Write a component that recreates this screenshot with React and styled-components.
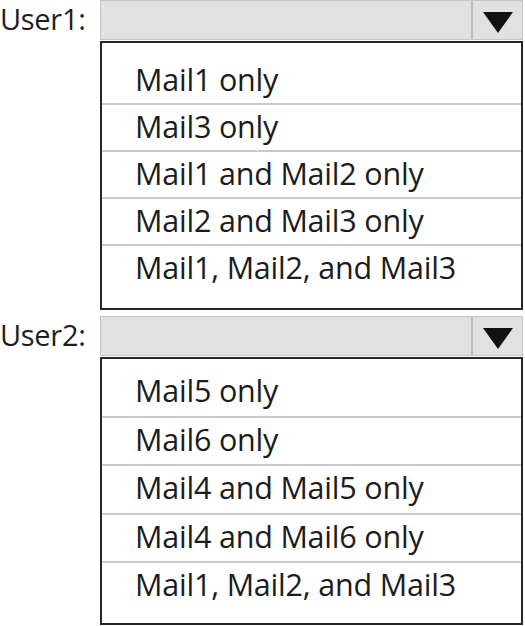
import React from "react";
import styled, { createGlobalStyle } from "styled-components";

const GlobalStyle = createGlobalStyle`
  html, body {
    margin: 0;
    padding: 0;
    background: #ffffff;
  }
  body {
    font-family: "Open Sans", "Noto Sans", "Liberation Sans", sans-serif;
    color: #1a1a1a;
  }
`;

const Page = styled.div`
  width: 525px;
  display: flex;
  flex-direction: column;
`;

const Section = styled.div`
  display: flex;
  margin-top: ${(p) => p.top}px;
`;

const Label = styled.div`
  width: 100px;
  flex: none;
  font-size: 29px;
  line-height: 38px;
  color: #1e1e1e;
  letter-spacing: -0.3px;
`;

const Field = styled.div`
  width: 423px;
  display: flex;
  flex-direction: column;
`;

const SelectBar = styled.div`
  height: 40px;
  display: flex;
  box-sizing: border-box;
  background: #e1e1e1;
  border: 1px solid #c4c4c4;
`;

const SelectValue = styled.div`
  flex: 1;
  border-right: 2px solid #bdbdbd;
`;

const ArrowBox = styled.div`
  width: 49px;
  display: flex;
  align-items: center;
  justify-content: center;
  padding-top: 4px;
  box-sizing: border-box;
`;

const OptionList = styled.ul`
  list-style: none;
  margin: 1px 0 0 0;
  padding: ${(p) => p.padTop}px 0 ${(p) => p.padBottom}px 0;
  border: 2px solid #262626;
  background: #ffffff;
`;

const OptionRow = styled.li`
  height: ${(p) => p.h}px;
  box-sizing: border-box;
  padding-left: 33px;
  font-size: 30.5px;
  line-height: ${(p) => p.h - 5}px;
  letter-spacing: -0.2px;
  color: #1c1c1c;
  border-bottom: ${(p) => (p.last ? "none" : "2px solid #c9c9c9")};
  white-space: nowrap;
`;

const Arrow = () => (
  <svg width="30" height="21" viewBox="0 0 30 21">
    <polygon points="0,0 30,0 15,21" fill="#111" />
  </svg>
);

const groups = [
  {
    user: "User1:",
    top: 0,
    padTop: 15,
    padBottom: 15,
    rowH: 47,
    options: [
      "Mail1 only",
      "Mail3 only",
      "Mail1 and Mail2 only",
      "Mail2 and Mail3 only",
      "Mail1, Mail2, and Mail3",
    ],
  },
  {
    user: "User2:",
    top: 6,
    padTop: 10,
    padBottom: 11,
    rowH: 48.5,
    options: [
      "Mail5 only",
      "Mail6 only",
      "Mail4 and Mail5 only",
      "Mail4 and Mail6 only",
      "Mail1, Mail2, and Mail3",
    ],
  },
];

export default function App() {
  return (
    <>
      <GlobalStyle />
      <Page>
        {groups.map((g) => (
          <Section key={g.user} top={g.top}>
            <Label>{g.user}</Label>
            <Field>
              <SelectBar>
                <SelectValue />
                <ArrowBox>
                  <Arrow />
                </ArrowBox>
              </SelectBar>
              <OptionList padTop={g.padTop} padBottom={g.padBottom}>
                {g.options.map((o, i) => (
                  <OptionRow
                    key={o}
                    h={g.rowH}
                    last={i === g.options.length - 1}
                  >
                    {o}
                  </OptionRow>
                ))}
              </OptionList>
            </Field>
          </Section>
        ))}
      </Page>
    </>
  );
}
